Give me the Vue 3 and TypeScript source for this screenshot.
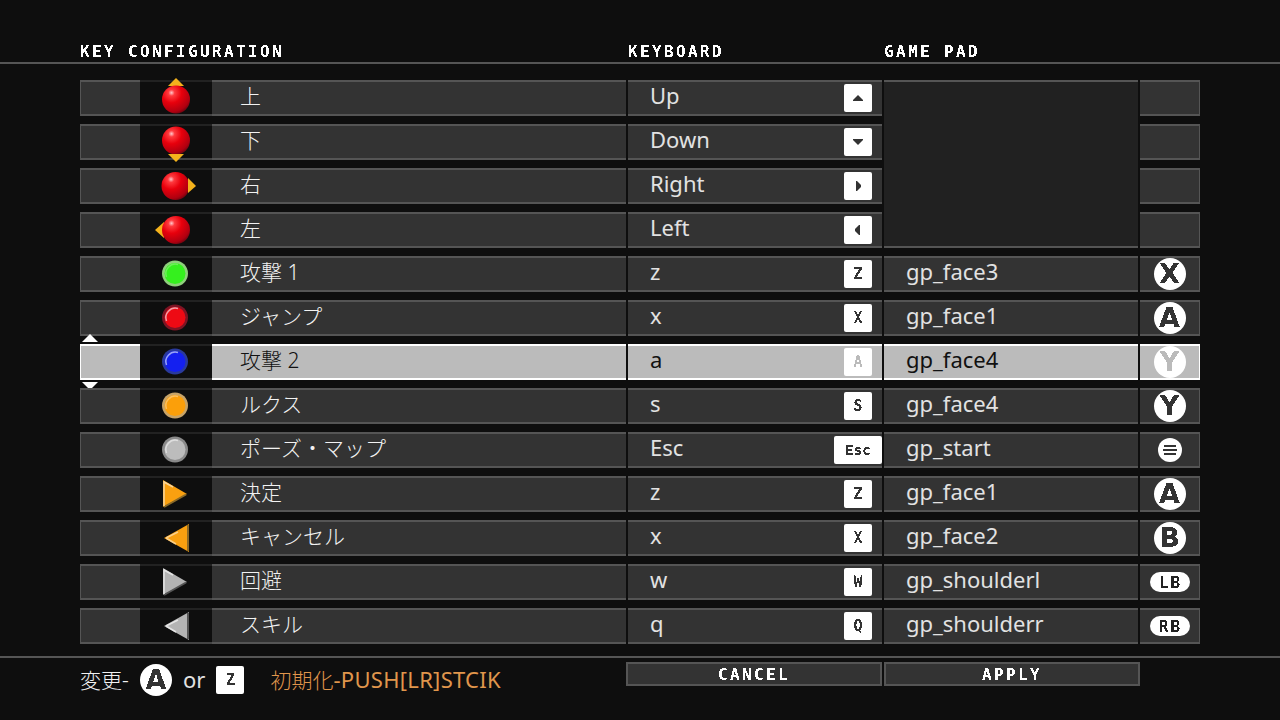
<script setup lang="ts">
type Row = {
  icon: string
  name: string
  key: string
  cap: string
  pad?: string
  btn?: string
  sel?: boolean
}

const rows: Row[] = [
  { icon: 'up', name: '上', key: 'Up', cap: '^' },
  { icon: 'down', name: '下', key: 'Down', cap: 'v' },
  { icon: 'right', name: '右', key: 'Right', cap: '>' },
  { icon: 'left', name: '左', key: 'Left', cap: '<' },
  { icon: 'green', name: '攻撃 1', key: 'z', cap: 'Z', pad: 'gp_face3', btn: 'X' },
  { icon: 'red', name: 'ジャンプ', key: 'x', cap: 'X', pad: 'gp_face1', btn: 'A' },
  { icon: 'blue', name: '攻撃 2', key: 'a', cap: 'A', pad: 'gp_face4', btn: 'Y', sel: true },
  { icon: 'orange', name: 'ルクス', key: 's', cap: 'S', pad: 'gp_face4', btn: 'Y' },
  { icon: 'grey', name: 'ポーズ・マップ', key: 'Esc', cap: 'Esc', pad: 'gp_start', btn: 'menu' },
  { icon: 'triR', name: '決定', key: 'z', cap: 'Z', pad: 'gp_face1', btn: 'A' },
  { icon: 'triL', name: 'キャンセル', key: 'x', cap: 'X', pad: 'gp_face2', btn: 'B' },
  { icon: 'triRg', name: '回避', key: 'w', cap: 'W', pad: 'gp_shoulderl', btn: 'LB' },
  { icon: 'triLg', name: 'スキル', key: 'q', cap: 'Q', pad: 'gp_shoulderr', btn: 'RB' },
]

const balls: Record<string, { edge: string; fill: string; ring: string }> = {
  green: { edge: '#8fd07c', fill: '#35f01e', ring: '#6cf058' },
  red: { edge: '#7e1424', fill: '#ee0a14', ring: '#f0a0a8' },
  blue: { edge: '#2a3a9c', fill: '#1420f0', ring: '#9aa6f5' },
  orange: { edge: '#c8a468', fill: '#fb9f0a', ring: '#fcc060' },
  grey: { edge: '#8a8a8a', fill: '#bcbcbc', ring: '#dedede' },
}

const tris: Record<string, { pts: string; hi: string; lo: string; fill: string; edge: string; shine: string }> = {
  triR: { pts: '23,4 47,18 23,31', hi: 'M24 5 L24 30 M24 6 L33 11', lo: 'M24 31 L46 18.5', fill: '#f9a010', edge: '#8a6a28', shine: '#f8d49a' },
  triL: { pts: '49,4 24,18 49,32', hi: 'M26 18 L38 12 M26 18 L36 24', lo: 'M48 5 L48 31', fill: '#f9a010', edge: '#8a6a28', shine: '#fbd08a' },
  triRg: { pts: '23,4 47,18 23,31', hi: 'M24 5 L24 30 M24 6 L33 11', lo: 'M24 31 L46 18.5', fill: '#b4b4b4', edge: '#555', shine: '#e4e4e4' },
  triLg: { pts: '49,4 24,18 49,32', hi: 'M26 18 L38 12 M26 18 L36 24', lo: 'M48 5 L48 31', fill: '#b4b4b4', edge: '#555', shine: '#e4e4e4' },
}
</script>

<template>
  <main class="screen">
    <svg class="defs" width="0" height="0" aria-hidden="true">
      <defs>
        <radialGradient id="gloss" cx="0.34" cy="0.26" r="0.8">
          <stop offset="0" stop-color="#ffc8cc" />
          <stop offset="0.14" stop-color="#ff3a3e" />
          <stop offset="0.45" stop-color="#e8000c" />
          <stop offset="0.85" stop-color="#b00010" />
          <stop offset="1" stop-color="#6a0410" />
        </radialGradient>
        <filter id="crisp" x="-5%" y="-5%" width="110%" height="110%" color-interpolation-filters="sRGB">
          <feComponentTransfer>
            <feFuncA type="discrete" tableValues="0 1" />
          </feComponentTransfer>
        </filter>
      </defs>
    </svg>

    <header class="head">
      <div class="pixel crisp head-a">KEY CONFIGURATION</div>
      <div class="pixel crisp head-b">KEYBOARD</div>
      <div class="pixel crisp head-c">GAME PAD</div>
    </header>

    <section class="table">
      <template v-for="(r, i) in rows" :key="i">
        <div class="cell lead" :class="{ sel: r.sel }">
          <svg v-if="r.sel" class="sel-up" width="16" height="8" viewBox="0 0 16 8"><polygon points="8,0 16,8 0,8" fill="#fff" /></svg>
          <svg v-if="r.sel" class="sel-down" width="16" height="8" viewBox="0 0 16 8"><polygon points="0,0 16,0 8,8" fill="#fff" /></svg>
        </div>
        <div class="cell ico">
          <svg class="ico-svg" width="72" height="36" viewBox="0 0 72 36">
            <template v-if="r.icon === 'up'">
              <polygon points="28,6 36,-2 44,6" fill="#f4b21c" />
              <circle cx="36" cy="19.5" r="14" fill="url(#gloss)" />
            </template>
            <template v-else-if="r.icon === 'down'">
              <circle cx="36" cy="16.5" r="14" fill="url(#gloss)" />
              <polygon points="28,30 44,30 36,38" fill="#f4b21c" />
            </template>
            <template v-else-if="r.icon === 'right'">
              <circle cx="35.5" cy="18" r="14" fill="url(#gloss)" />
              <polygon points="48,10 56,18 48,25" fill="#f4b21c" />
            </template>
            <template v-else-if="r.icon === 'left'">
              <polygon points="24,10 15,18 24,26" fill="#f4b21c" />
              <circle cx="36" cy="18" r="14" fill="url(#gloss)" />
            </template>
            <template v-else-if="balls[r.icon]">
              <circle cx="35" cy="17.5" r="13" :fill="balls[r.icon].edge" />
              <circle cx="35" cy="17.5" r="10.5" :fill="balls[r.icon].fill" />
              <path d="M26.5 21 A9.5 9.5 0 0 1 38 8.5" fill="none" :stroke="balls[r.icon].ring" stroke-width="1.5" />
            </template>
            <template v-else-if="tris[r.icon]">
              <polygon :points="tris[r.icon].pts" :fill="tris[r.icon].fill" />
              <path :d="tris[r.icon].lo" fill="none" :stroke="tris[r.icon].edge" stroke-width="2" />
              <path :d="tris[r.icon].hi" fill="none" :stroke="tris[r.icon].shine" stroke-width="1.5" />
            </template>
          </svg>
        </div>
        <div class="cell name" :class="{ sel: r.sel }"><span class="label">{{ r.name }}</span></div>
        <div class="cell kb" :class="{ sel: r.sel }">
          <span class="label">{{ r.key }}</span>
          <span class="cap" :class="{ wide: r.cap === 'Esc', ghost: r.sel }">
            <svg v-if="r.cap === '^'" width="16" height="10" viewBox="0 0 16 10"><polygon points="8,2 13,7 13,8 3,8 3,7" fill="#333" /></svg>
            <svg v-else-if="r.cap === 'v'" width="16" height="10" viewBox="0 0 16 10"><polygon points="3,2 13,2 13,3 8,8 3,3" fill="#333" /></svg>
            <svg v-else-if="r.cap === '>'" width="10" height="14" viewBox="0 0 10 14"><polygon points="3,2 4,2 8,6 8,8 4,12 3,12" fill="#333" /></svg>
            <svg v-else-if="r.cap === '<'" width="10" height="14" viewBox="0 0 10 14"><polygon points="7,2 6,2 2,6 2,8 6,12 7,12" fill="#333" /></svg>
            <span v-else class="crisp">{{ r.cap }}</span>
          </span>
        </div>
        <div v-if="i === 0" class="cell blank"></div>
        <div v-if="r.pad" class="cell gp" :class="{ sel: r.sel }"><span class="label">{{ r.pad }}</span></div>
        <div class="cell btn" :class="{ sel: r.sel }">
          <span v-if="r.btn === 'menu'" class="disc small">
            <svg width="14" height="10" viewBox="0 0 14 10"><path d="M1 1 H13 M0 5 H14 M1 9 H13" stroke="#333" stroke-width="2" /></svg>
          </span>
          <span v-else-if="r.btn === 'LB' || r.btn === 'RB'" class="pill"><span class="crisp">{{ r.btn }}</span></span>
          <span v-else-if="r.btn" class="disc" :class="{ ghost: r.sel }"><span class="crisp">{{ r.btn }}</span></span>
        </div>
      </template>
    </section>

    <footer class="foot">
      <div class="hint">
        <span class="hint-a">変更-</span>
        <span class="disc"><span class="crisp">A</span></span>
        <span class="hint-or">or</span>
        <span class="cap foot-cap"><span class="crisp">Z</span></span>
        <span class="hint-b"><span class="hint-cjk">初期化</span>-PUSH[LR]STCIK</span>
      </div>
      <div class="actions">
        <button class="action"><span class="pixel crisp">CANCEL</span></button>
        <button class="action"><span class="pixel crisp">APPLY</span></button>
      </div>
    </footer>
  </main>
</template>

<style scoped>
.screen {
  width: 1280px;
  height: 720px;
  overflow: hidden;
  background: #0e0e0e;
  color: #e2e2e2;
  font-family: "Noto Sans", "Noto Sans CJK JP", sans-serif;
  font-size: 22px;
  position: relative;
}
.defs { position: absolute; }
.crisp { filter: url(#crisp); display: inline-block; }
.pixel {
  font-family: "DejaVu Sans Mono", "Liberation Mono", monospace;
  font-weight: 700;
  font-size: 16px;
  letter-spacing: 2.37px;
  color: #fff;
}
.head {
  height: 62px;
  border-bottom: 2px solid #555;
  display: grid;
  grid-template-columns: 548px 256px auto;
  padding: 0 0 0 80px;
  align-items: center;
  box-sizing: content-box;
}
.head > div { padding-top: 42px; line-height: 20px; }
.table {
  margin: 16px 0 0 80px;
  width: 1120px;
  display: grid;
  grid-template-columns: 60px 72px 414px 256px 256px 62px;
  grid-auto-rows: 36px;
  row-gap: 8px;
}
.cell {
  background: #333;
  border-top: 2px solid #555;
  border-bottom: 2px solid #555;
  box-sizing: border-box;
  display: flex;
  align-items: center;
  position: relative;
  min-width: 0;
}
.lead { border-left: 1px solid #555; }
.btn { margin-left: 2px; border-right: 1px solid #555; justify-content: center; }
.ico { background: #0e0e0e; border-top-color: #222; border-bottom-color: #444; }
.ico-svg { display: block; margin: -2px 0; overflow: visible; }
.name { padding-left: 28px; font-size: 21px; color: #f2f2f2; }
.name .label { font-weight: 300; margin-top: -5px; }
.kb { margin-left: 2px; padding-left: 22px; }
.gp { margin-left: 2px; padding-left: 22px; }
.blank {
  grid-column: 5;
  grid-row: 1 / span 4;
  margin-left: 2px;
  background: #212121;
}
.label { display: block; line-height: 30px; margin-top: -7px; white-space: nowrap; }
.sel {
  background: #bbb;
  color: #111;
  border-color: #fff;
}
.sel-up { position: absolute; left: 1px; top: -12px; }
.sel-down { position: absolute; left: 1px; bottom: -12px; }
.cap {
  position: absolute;
  right: 10px;
  top: 2px;
  width: 28px;
  height: 28px;
  border-radius: 2px;
  background: #fff;
  color: #333;
  display: flex;
  align-items: center;
  justify-content: center;
  font-family: "DejaVu Sans Mono", monospace;
  font-size: 15px;
  font-weight: 700;
}
.cap.wide { width: 48px; right: 0; font-size: 14px; }
.cap.ghost { color: #bbb; }
.disc {
  width: 32px;
  height: 32px;
  border-radius: 50%;
  background: #fff;
  color: #333;
  display: flex;
  align-items: center;
  justify-content: center;
  font-family: "DejaVu Sans", sans-serif;
  font-weight: 700;
  font-size: 27px;
  line-height: 32px;
}
.disc.ghost { color: #bbb; }
.disc.small { width: 24px; height: 24px; }
.pill {
  width: 40px;
  height: 20px;
  border-radius: 10px;
  background: #fff;
  color: #222;
  display: flex;
  align-items: center;
  justify-content: center;
  font-family: "DejaVu Sans Mono", monospace;
  font-weight: 700;
  font-size: 16px;
  letter-spacing: 2px;
  text-indent: 2px;
}
.foot {
  margin-top: 12px;
  border-top: 2px solid #555;
  position: relative;
  height: 62px;
}
.hint {
  position: absolute;
  left: 80px;
  top: 6px;
  height: 32px;
  display: flex;
  align-items: center;
}
.hint-a { width: 60px; white-space: nowrap; font-size: 21px; margin-top: -3px; font-weight: 300; color: #f2f2f2; }
.hint-or { margin-left: 11px; margin-top: -3px; }
.foot-cap { position: static; margin-left: 11px; }
.hint-b { margin-left: 26px; margin-top: -3px; color: #e0964c; white-space: nowrap; letter-spacing: 0.3px; }
.hint-cjk { font-size: 21px; letter-spacing: 0; font-weight: 300; }
.actions {
  position: absolute;
  left: 626px;
  top: 4px;
  display: flex;
  gap: 2px;
}
.action {
  width: 256px;
  height: 24px;
  padding: 0;
  background: #333;
  border: 2px solid #555;
  display: flex;
  align-items: center;
  justify-content: center;
}
</style>
